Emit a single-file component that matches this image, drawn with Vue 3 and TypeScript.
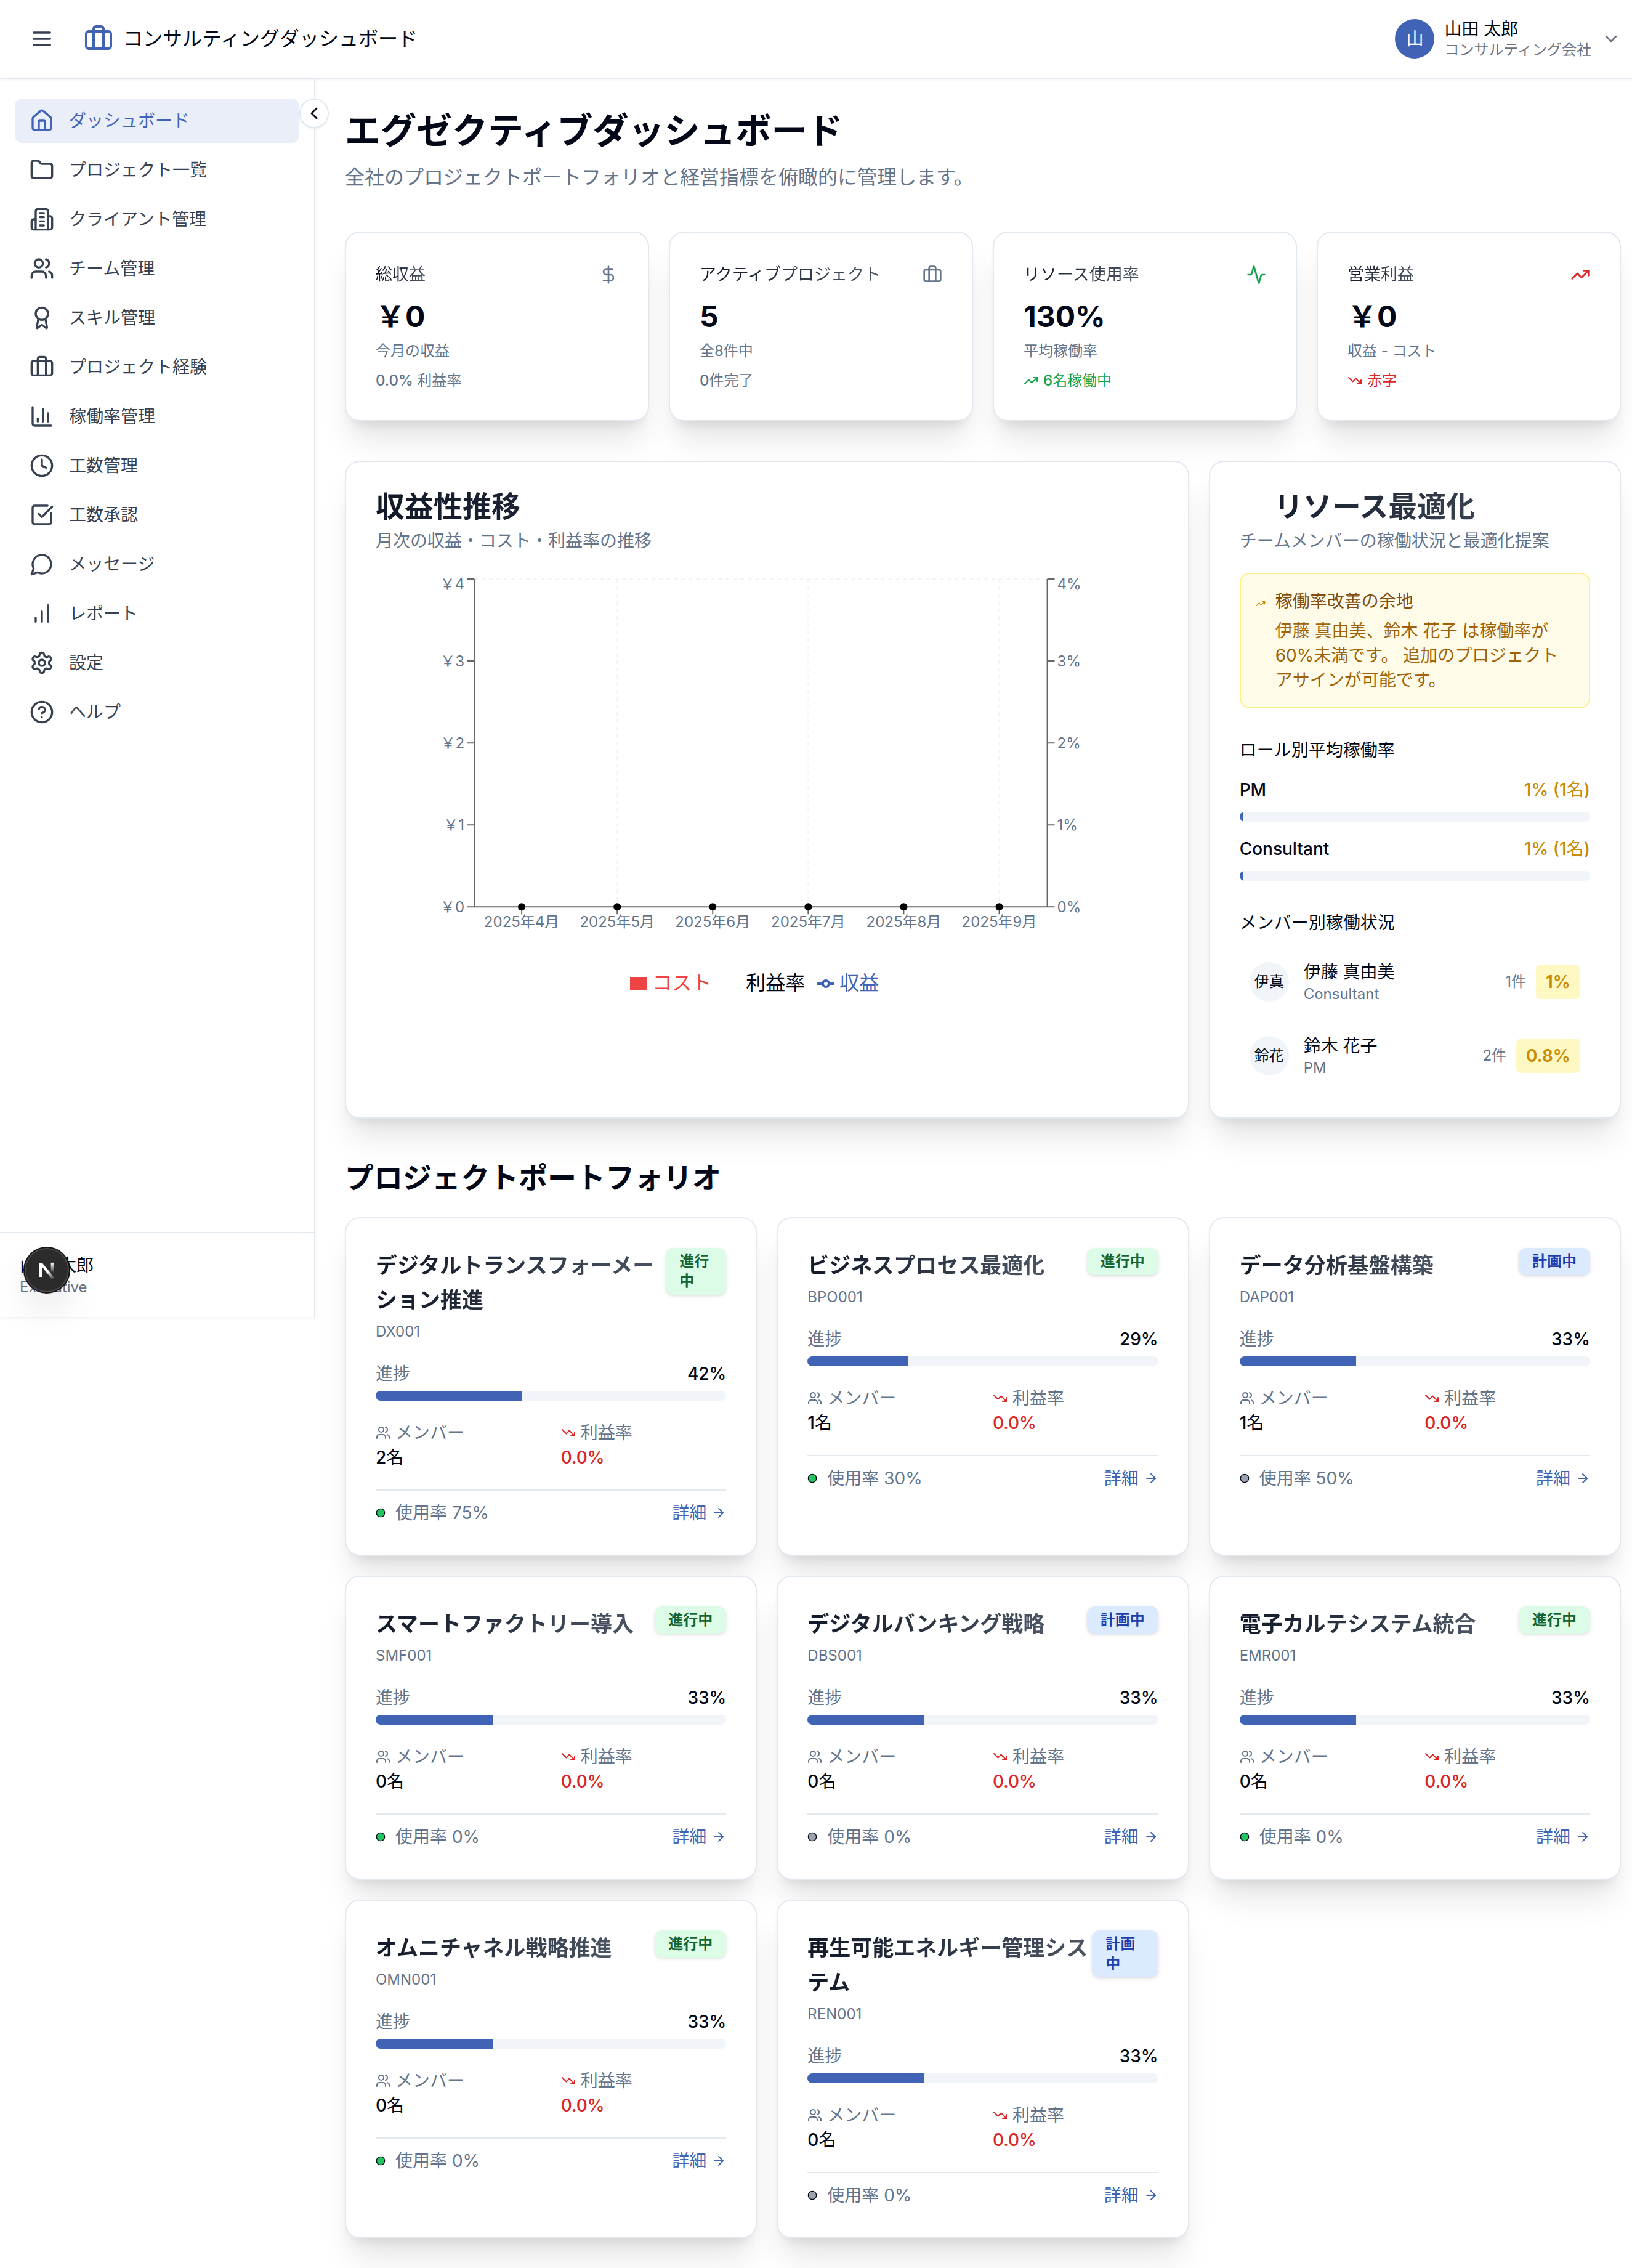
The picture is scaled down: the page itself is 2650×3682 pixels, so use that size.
<script setup lang="ts">
import { h, type FunctionalComponent } from 'vue'

type Shape = [string, Record<string, string | number>]

const p = (d: string): Shape => ['path', { d }]

const icons: Record<string, Shape[]> = {
  menu: [p('M4 6h16M4 12h16M4 18h16')],
  briefcase: [
    p('M16 20V4a2 2 0 0 0-2-2h-4a2 2 0 0 0-2 2v16'),
    ['rect', { x: 2, y: 6, width: 20, height: 14, rx: 2 }],
  ],
  home: [
    p('M15 21v-8a1 1 0 0 0-1-1h-4a1 1 0 0 0-1 1v8'),
    p('M3 10a2 2 0 0 1 .709-1.528l7-5.999a2 2 0 0 1 2.582 0l7 5.999A2 2 0 0 1 21 10v9a2 2 0 0 1-2 2H5a2 2 0 0 1-2-2z'),
  ],
  folder: [
    p('M20 20a2 2 0 0 0 2-2V8a2 2 0 0 0-2-2h-7.9a2 2 0 0 1-1.69-.9L9.6 3.9A2 2 0 0 0 7.93 3H4a2 2 0 0 0-2 2v13a2 2 0 0 0 2 2Z'),
  ],
  building: [
    p('M6 22V4a2 2 0 0 1 2-2h8a2 2 0 0 1 2 2v18Z'),
    p('M6 12H4a2 2 0 0 0-2 2v6a2 2 0 0 0 2 2h2'),
    p('M18 9h2a2 2 0 0 1 2 2v9a2 2 0 0 1-2 2h-2'),
    p('M10 6h4M10 10h4M10 14h4M10 18h4'),
  ],
  users: [
    p('M16 21v-2a4 4 0 0 0-4-4H6a4 4 0 0 0-4 4v2'),
    ['circle', { cx: 9, cy: 7, r: 4 }],
    p('M22 21v-2a4 4 0 0 0-3-3.87'),
    p('M16 3.13a4 4 0 0 1 0 7.75'),
  ],
  award: [
    p('m15.477 12.89 1.515 8.526a.5.5 0 0 1-.81.47l-3.58-2.687a1 1 0 0 0-1.197 0l-3.586 2.686a.5.5 0 0 1-.81-.469l1.514-8.526'),
    ['circle', { cx: 12, cy: 8, r: 6 }],
  ],
  chart: [p('M3 3v16a2 2 0 0 0 2 2h16'), p('M18 17V9M13 17V5M8 17v-3')],
  clock: [['circle', { cx: 12, cy: 12, r: 10 }], p('M12 6v6l4 2')],
  check: [
    p('M21 10.5V19a2 2 0 0 1-2 2H5a2 2 0 0 1-2-2V5a2 2 0 0 1 2-2h12.5'),
    p('m9 11 3 3L22 4'),
  ],
  message: [p('M7.9 20A9 9 0 1 0 4 16.1L2 22Z')],
  bars: [p('M12 20V10M18 20V4M6 20v-4')],
  settings: [
    p('M12.22 2h-.44a2 2 0 0 0-2 2v.18a2 2 0 0 1-1 1.73l-.43.25a2 2 0 0 1-2 0l-.15-.08a2 2 0 0 0-2.73.73l-.22.38a2 2 0 0 0 .73 2.73l.15.1a2 2 0 0 1 1 1.72v.51a2 2 0 0 1-1 1.74l-.15.09a2 2 0 0 0-.73 2.73l.22.38a2 2 0 0 0 2.73.73l.15-.08a2 2 0 0 1 2 0l.43.25a2 2 0 0 1 1 1.73V20a2 2 0 0 0 2 2h.44a2 2 0 0 0 2-2v-.18a2 2 0 0 1 1-1.73l.43-.25a2 2 0 0 1 2 0l.15.08a2 2 0 0 0 2.73-.73l.22-.39a2 2 0 0 0-.73-2.73l-.15-.08a2 2 0 0 1-1-1.74v-.5a2 2 0 0 1 1-1.74l.15-.09a2 2 0 0 0 .73-2.73l-.22-.38a2 2 0 0 0-2.73-.73l-.15.08a2 2 0 0 1-2 0l-.43-.25a2 2 0 0 1-1-1.73V4a2 2 0 0 0-2-2z'),
    ['circle', { cx: 12, cy: 12, r: 3 }],
  ],
  help: [
    ['circle', { cx: 12, cy: 12, r: 10 }],
    p('M9.09 9a3 3 0 0 1 5.83 1c0 2-3 3-3 3M12 17h.01'),
  ],
  dollar: [p('M12 2v20'), p('M17 5H9.5a3.5 3.5 0 0 0 0 7h5a3.5 3.5 0 0 1 0 7H6')],
  activity: [
    p('M22 12h-2.48a2 2 0 0 0-1.93 1.46l-2.35 8.36a.25.25 0 0 1-.48 0L9.24 2.18a.25.25 0 0 0-.48 0l-2.35 8.36A2 2 0 0 1 4.49 12H2'),
  ],
  up: [p('m22 7-8.5 8.5-5-5L2 17'), p('M16 7h6v6')],
  down: [p('m22 17-8.5-8.5-5 5L2 7'), p('M16 17h6v-6')],
  arrow: [p('M5 12h14'), p('m12 5 7 7-7 7')],
  left: [p('m15 18-6-6 6-6')],
  chevron: [p('m6 9 6 6 6-6')],
}

const Icon: FunctionalComponent<{ name: string; size: number }> = (props) =>
  h(
    'svg',
    {
      width: props.size,
      height: props.size,
      viewBox: '0 0 24 24',
      fill: 'none',
      stroke: 'currentColor',
      'stroke-width': 2,
      'stroke-linecap': 'round',
      'stroke-linejoin': 'round',
      'aria-hidden': 'true',
    },
    icons[props.name].map(([tag, attrs]) => h(tag, attrs)),
  )
Icon.props = ['name', 'size']

const navItems = [
  { icon: 'home', label: 'ダッシュボード' },
  { icon: 'folder', label: 'プロジェクト一覧' },
  { icon: 'building', label: 'クライアント管理' },
  { icon: 'users', label: 'チーム管理' },
  { icon: 'award', label: 'スキル管理' },
  { icon: 'briefcase', label: 'プロジェクト経験' },
  { icon: 'chart', label: '稼働率管理' },
  { icon: 'clock', label: '工数管理' },
  { icon: 'check', label: '工数承認' },
  { icon: 'message', label: 'メッセージ' },
  { icon: 'bars', label: 'レポート' },
  { icon: 'settings', label: '設定' },
  { icon: 'help', label: 'ヘルプ' },
]

// Full-width yen sign, as the ja-JP currency format prints it
const yen = (amount: number) => `\uFFE5${amount}`

interface Kpi {
  title: string
  icon: string
  tone: string
  value: string
  desc: string
  figure: string
  note: string
  noteIcon?: string
  noteTone: string
}

const kpis: Kpi[] = [
  { title: '総収益', icon: 'dollar', tone: 'muted', value: yen(0), desc: '今月の収益', figure: '0.0% ', note: '利益率', noteTone: 'muted' },
  { title: 'アクティブプロジェクト', icon: 'briefcase', tone: 'muted', value: '5', desc: '全8件中', figure: '0', note: '件完了', noteTone: 'muted' },
  { title: 'リソース使用率', icon: 'activity', tone: 'green', value: '130%', desc: '平均稼働率', figure: '6', note: '名稼働中', noteIcon: 'up', noteTone: 'green' },
  { title: '営業利益', icon: 'up', tone: 'red', value: yen(0), desc: '収益 - コスト', figure: '', note: '赤字', noteIcon: 'down', noteTone: 'red' },
]

const months = [4, 5, 6, 7, 8, 9].map((m, i) => ({ label: `2025年${m}月`, x: 237 + i * 155 }))
const ticks = [4, 3, 2, 1, 0].map((v, i) => ({ v, y: 10 + i * 133, ty: (i === 0 ? 18 : 10 + i * 133) + 9 }))

const roles = [
  { name: 'PM', rate: 1, people: 1 },
  { name: 'Consultant', rate: 1, people: 1 },
]

const members = [
  { initials: '伊真', name: '伊藤 真由美', role: 'Consultant', count: '1件', rate: '1%' },
  { initials: '鈴花', name: '鈴木 花子', role: 'PM', count: '2件', rate: '0.8%' },
]

const project = (name: string, code: string, active: boolean, done: number, total: number, people: number, usage: number) => ({
  name, code, active, progress: (done / total) * 100, people, usage,
})

const projects = [
  project('デジタルトランスフォーメーション推進', 'DX001', true, 5, 12, 2, 75),
  project('ビジネスプロセス最適化', 'BPO001', true, 2, 7, 1, 30),
  project('データ分析基盤構築', 'DAP001', false, 1, 3, 1, 50),
  project('スマートファクトリー導入', 'SMF001', true, 1, 3, 0, 0),
  project('デジタルバンキング戦略', 'DBS001', false, 1, 3, 0, 0),
  project('電子カルテシステム統合', 'EMR001', true, 1, 3, 0, 0),
  project('オムニチャネル戦略推進', 'OMN001', true, 1, 3, 0, 0),
  project('再生可能エネルギー管理システム', 'REN001', false, 1, 3, 0, 0),
]
</script>

<template>
  <div class="app" lang="ja">
    <header class="topbar">
      <button class="menu-btn" type="button" aria-label="メニュー"><Icon name="menu" :size="40" /></button>
      <a class="brand" href="#">
        <Icon name="briefcase" :size="48" />
        <span>コンサルティングダッシュボード</span>
      </a>
      <button class="user" type="button">
        <span class="user-avatar">山</span>
        <span class="user-text">
          <span class="user-name">山田 太郎</span>
          <span class="user-org">コンサルティング会社</span>
        </span>
        <Icon name="chevron" :size="32" />
      </button>
    </header>

    <div class="body">
      <aside class="sidebar">
        <button class="collapse" type="button" aria-label="サイドバーを閉じる"><Icon name="left" :size="32" /></button>
        <nav class="nav">
          <a v-for="(item, i) in navItems" :key="item.label" href="#" :class="['nav-item', { active: i === 0 }]">
            <Icon :name="item.icon" :size="40" />
            <span>{{ item.label }}</span>
          </a>
        </nav>
        <div class="side-user">
          <div>山田 太郎</div>
          <div class="side-role">Executive</div>
          <button class="dev-badge" type="button" aria-label="開発ツール">
            <svg width="44" height="44" viewBox="0 0 40 40" fill="none" aria-hidden="true">
              <defs>
                <linearGradient id="nd" x1="22" y1="22" x2="31" y2="33" gradientUnits="userSpaceOnUse">
                  <stop stop-color="#fff" /><stop offset="1" stop-color="#fff" stop-opacity="0" />
                </linearGradient>
                <linearGradient id="nv" x1="0" y1="9" x2="0" y2="24" gradientUnits="userSpaceOnUse">
                  <stop stop-color="#fff" /><stop offset="1" stop-color="#fff" stop-opacity="0" />
                </linearGradient>
              </defs>
              <path d="M9 30V9h4l18 22-3 3L13 15v15z" fill="url(#nd)" />
              <path d="M26 9h4v15h-4z" fill="url(#nv)" />
            </svg>
          </button>
        </div>
      </aside>

      <main class="main">
        <h1>エグゼクティブダッシュボード</h1>
        <p class="lead">全社のプロジェクトポートフォリオと経営指標を俯瞰的に管理します。</p>

        <section class="kpis">
          <article v-for="k in kpis" :key="k.title" class="card">
            <div class="kpi-head">
              <h2 class="kpi-title fade">{{ k.title }}</h2>
              <Icon :name="k.icon" :size="32" :class="k.tone" />
            </div>
            <div class="kpi-value">{{ k.value }}</div>
            <p class="kpi-desc">{{ k.desc }}</p>
            <p :class="['kpi-note', k.noteTone]">
              <Icon v-if="k.noteIcon" :name="k.noteIcon" :size="24" />
              <span><span class="strong">{{ k.figure }}</span>{{ k.note }}</span>
            </p>
          </article>
        </section>

        <section class="panels">
          <article class="card wide">
            <h2 class="panel-title fade">収益性推移</h2>
            <p class="panel-desc">月次の収益・コスト・利益率の推移</p>
            <svg class="chart" viewBox="0 0 1270 580" role="img" aria-label="月次の収益推移">
              <g class="grid">
                <path d="M160 10H1090M392 10V542M702 10V542M1012 10V542" />
              </g>
              <g class="axis">
                <path d="M160 10V542M1090 10V542M160 542H1090" />
                <path v-for="t in ticks" :key="t.v" :d="`M148 ${t.y}h12M1090 ${t.y}h12`" />
                <path v-for="m in months" :key="m.x" :d="`M${m.x} 542v12`" />
              </g>
              <g class="tick-text">
                <text v-for="t in ticks" :key="t.v" x="144" :y="t.ty" text-anchor="end">{{ yen(t.v) }}</text>
                <text v-for="t in ticks" :key="t.v" x="1106" :y="t.ty">{{ t.v }}%</text>
                <text v-for="m in months" :key="m.x" :x="m.x" y="575" text-anchor="middle">{{ m.label }}</text>
              </g>
              <circle v-for="m in months" :key="m.x" :cx="m.x" cy="542" r="6" />
            </svg>
            <ul class="legend">
              <li class="cost">
                <svg width="28" height="28" viewBox="0 0 28 28" aria-hidden="true"><path d="M0 4h28v21H0z" fill="currentColor" /></svg>
                コスト
              </li>
              <li>
                <svg width="28" height="28" viewBox="0 0 28 28" aria-hidden="true"></svg>
                利益率
              </li>
              <li class="income">
                <svg width="28" height="28" viewBox="0 0 28 28" fill="none" stroke="currentColor" stroke-width="4" aria-hidden="true">
                  <path d="M0 15h9M19 15h9" /><circle cx="14" cy="15" r="5" />
                </svg>
                収益
              </li>
            </ul>
          </article>

          <article class="card">
            <h2 class="panel-title shifted fade">リソース最適化</h2>
            <p class="panel-desc">チームメンバーの稼働状況と最適化提案</p>
            <div class="alert">
              <Icon name="up" :size="16" class="alert-icon" />
              <div>
                <h3>稼働率改善の余地</h3>
                <p>伊藤 真由美、鈴木 花子 は稼働率が60%未満です。 追加のプロジェクトアサインが可能です。</p>
              </div>
            </div>

            <h3 class="sub-title">ロール別平均稼働率</h3>
            <div class="roles">
              <div v-for="r in roles" :key="r.name">
                <div class="row">
                  <span class="strong">{{ r.name }}</span>
                  <span class="amber">{{ r.rate }}% ({{ r.people }}<span class="unit">名</span>)</span>
                </div>
                <div class="bar role-bar"><div class="fill" :style="{ width: r.rate + '%' }"></div></div>
              </div>
            </div>

            <h3 class="sub-title">メンバー別稼働状況</h3>
            <ul class="members">
              <li v-for="m in members" :key="m.name">
                <span class="avatar">{{ m.initials }}</span>
                <div class="member-text">
                  <div>{{ m.name }}</div>
                  <div class="member-role">{{ m.role }}</div>
                </div>
                <span class="count">{{ m.count }}</span>
                <span class="rate">{{ m.rate }}</span>
              </li>
            </ul>
          </article>
        </section>

        <section>
          <h2 class="section-title">プロジェクトポートフォリオ</h2>
          <div class="projects">
            <article v-for="pr in projects" :key="pr.code" class="card">
              <div class="project-head">
                <h3 class="project-title fade">{{ pr.name }}</h3>
                <span :class="['badge', pr.active ? 'active' : 'planned']">{{ pr.active ? '進行中' : '計画中' }}</span>
              </div>
              <p class="code">{{ pr.code }}</p>
              <div class="row progress-row">
                <span class="muted">進捗</span>
                <span class="strong">{{ Math.round(pr.progress) }}%</span>
              </div>
              <div class="bar"><div class="fill" :style="{ width: pr.progress + '%' }"></div></div>
              <dl class="stats">
                <div>
                  <dt><Icon name="users" :size="24" />メンバー</dt>
                  <dd>{{ pr.people }}<span class="unit">名</span></dd>
                </div>
                <div>
                  <dt><Icon name="down" :size="24" class="red" />利益率</dt>
                  <dd class="red">0.0%</dd>
                </div>
              </dl>
              <div class="row project-foot">
                <span class="usage muted">
                  <svg width="16" height="16" viewBox="0 0 24 24" aria-hidden="true">
                    <circle cx="12" cy="12" r="10" stroke="#020817" stroke-width="2" :fill="pr.active ? '#22c55e' : '#9ca3af'" />
                  </svg>
                  使用率 {{ pr.usage }}%
                </span>
                <a href="#" class="detail">詳細<Icon name="arrow" :size="24" /></a>
              </div>
            </article>
          </div>
        </section>
      </main>
    </div>
  </div>
</template>

<style>
body {
  margin: 0;
  background: #fff;
}
</style>

<style scoped>
.app,
.app * {
  box-sizing: border-box;
}
.app {
  font-family: Inter, 'Noto Sans CJK JP', sans-serif;
  font-size: 28px;
  line-height: 40px;
  color: #020817;
}
.app :is(h1, h2, h3, p, ul, dl, dd) {
  margin: 0;
  padding: 0;
}
.app ul {
  list-style: none;
}
.app svg {
  display: block;
}
a {
  color: inherit;
  text-decoration: none;
}
button {
  font: inherit;
  color: inherit;
  border: 0;
  padding: 0;
  background: none;
}
.muted {
  color: #64748b;
}
.green {
  color: #16a34a;
}
.red {
  color: #dc2626;
}
.strong {
  font-weight: 500;
}
.unit {
  font-weight: 400;
}

.topbar {
  display: flex;
  align-items: center;
  height: 128px;
  padding: 0 18px 0 48px;
  background: #fff;
  border-bottom: 2px solid #e2e8f0;
  box-shadow: 0 2px 4px rgb(0 0 0 / 0.05);
}
.menu-btn {
  color: #374151;
}
.brand {
  display: flex;
  align-items: center;
  gap: 16px;
  margin-left: 48px;
  font-size: 32px;
  line-height: 48px;
}
.brand svg {
  color: #4063b5;
}
.user {
  display: flex;
  align-items: center;
  gap: 16px;
  margin-left: auto;
  text-align: left;
}
.user > svg {
  color: #6b7280;
}
.user-avatar {
  display: grid;
  place-items: center;
  width: 64px;
  height: 64px;
  border-radius: 50%;
  background: #4063b5;
  color: #fff;
}
.user-text {
  display: flex;
  flex-direction: column;
}
.user-name {
  line-height: 36px;
}
.user-org {
  font-size: 24px;
  line-height: 32px;
  color: #6b7280;
}

.body {
  display: flex;
  align-items: flex-start;
}
.sidebar {
  position: relative;
  flex: 0 0 512px;
  border-right: 2px solid #e2e8f0;
  box-shadow: 0 2px 4px rgb(0 0 0 / 0.05);
}
.collapse {
  position: absolute;
  top: 32px;
  right: -24px;
  display: grid;
  place-items: center;
  width: 48px;
  height: 48px;
  border: 2px solid #e2e8f0;
  border-radius: 50%;
  background: #fff;
  box-shadow: 0 2px 4px rgb(0 0 0 / 0.05);
}
.nav {
  display: flex;
  flex-direction: column;
  gap: 8px;
  min-height: 1872px;
  padding: 32px 24px;
}
.nav-item {
  display: flex;
  align-items: center;
  gap: 24px;
  padding: 16px 24px;
  border-radius: 12px;
  color: #374151;
}
.nav-item.active {
  background: #e9eef8;
  color: #4063b5;
}
.side-user {
  position: relative;
  padding: 32px;
  border-top: 2px solid #e2e8f0;
}
.side-role {
  font-size: 24px;
  line-height: 32px;
  color: #6b7280;
}
.dev-badge {
  position: absolute;
  top: 22px;
  left: 38px;
  display: grid;
  place-items: center;
  width: 76px;
  height: 76px;
  border: 2px solid #151515;
  border-radius: 50%;
  background: #2b2b2b;
  box-shadow: inset 0 0 0 2px #4a4a4a, 0 32px 64px -16px rgb(0 0 0 / 0.24);
}

.main {
  flex: 1;
  min-width: 0;
  padding: 48px 18px 48px 48px;
}
h1 {
  font-size: 58px;
  line-height: 72px;
  font-weight: 700;
}
.app .lead {
  margin-top: 16px;
  font-size: 32px;
  line-height: 48px;
  color: #64748b;
}
.card {
  padding: 48px;
  background: #fff;
  border: 2px solid #e2e8f0;
  border-radius: 24px;
  box-shadow: 0 40px 50px -10px rgb(0 0 0 / 0.1), 0 16px 20px -12px rgb(0 0 0 / 0.1);
}
.fade {
  color: transparent;
  background: linear-gradient(to right, #111827, #4b5563);
  background-clip: text;
  -webkit-background-clip: text;
}
.kpis {
  display: grid;
  grid-template-columns: repeat(4, 1fr);
  gap: 32px;
  margin-top: 64px;
}
.kpi-head {
  display: flex;
  align-items: center;
  justify-content: space-between;
}
.kpi-title {
  font-size: 27px;
  line-height: 40px;
  font-weight: 400;
}
.kpi-value {
  margin-top: 16px;
  font-size: 48px;
  line-height: 64px;
  font-weight: 700;
}
.app .kpi-desc {
  margin-top: 8px;
  font-size: 24px;
  line-height: 32px;
  color: #64748b;
}
.app .kpi-note {
  display: flex;
  align-items: center;
  gap: 8px;
  margin-top: 16px;
  font-size: 24px;
  line-height: 32px;
}
.kpi-note span {
  white-space: pre-wrap;
}

.panels {
  display: grid;
  grid-template-columns: repeat(3, 1fr);
  gap: 32px;
  margin-top: 64px;
}
.wide {
  grid-column: span 2;
}
.panel-title {
  font-size: 47px;
  line-height: 48px;
  font-weight: 700;
}
.app .shifted {
  padding-left: 56px;
}
.app .panel-desc {
  margin-top: 12px;
  color: #64748b;
}
.chart {
  width: 100%;
  margin-top: 32px;
}
.grid {
  fill: none;
  stroke: #f1f5f9;
  stroke-width: 2;
  stroke-dasharray: 6 6;
}
.axis {
  fill: none;
  stroke: #666;
  stroke-width: 2;
}
.tick-text {
  font-size: 24px;
  fill: #64748b;
}
.app .legend {
  display: flex;
  justify-content: center;
  gap: 20px;
  margin-top: 62px;
  padding-right: 40px;
  font-size: 32px;
  line-height: 48px;
}
.legend li {
  display: flex;
  align-items: center;
  gap: 8px;
}
.cost {
  color: #ef4444;
}
.income {
  color: #4063b5;
}

.alert {
  display: flex;
  gap: 16px;
  margin-top: 32px;
  padding: 24px;
  border: 2px solid #fef08a;
  border-radius: 16px;
  background: #fefce8;
  color: #a16207;
}
.alert h3 {
  font-size: 28px;
  font-weight: 400;
  color: #854d0e;
}
.app .alert p {
  margin-top: 8px;
}
.alert-icon {
  flex: none;
  margin-top: 16px;
  color: #ca8a04;
}
.app .sub-title {
  margin: 48px 0 24px;
  font-size: 28px;
  font-weight: 400;
}
.roles {
  display: flex;
  flex-direction: column;
  gap: 24px;
}
.row {
  display: flex;
  align-items: center;
  justify-content: space-between;
}
.amber {
  font-weight: 500;
  color: #ca8a04;
}
.bar {
  height: 16px;
  margin-top: 8px;
  border-radius: 8px;
  overflow: hidden;
  background: #f1f5f9;
}
.role-bar {
  margin-top: 16px;
}
.fill {
  height: 100%;
  background: #4063b5;
}
.members {
  display: flex;
  flex-direction: column;
  gap: 16px;
}
.members li {
  display: flex;
  align-items: center;
  padding: 16px;
}
.avatar {
  display: grid;
  place-items: center;
  width: 64px;
  height: 64px;
  margin-right: 24px;
  border-radius: 50%;
  background: #f1f5f9;
  font-size: 24px;
}
.member-text {
  flex: 1;
}
.member-role {
  font-size: 24px;
  line-height: 32px;
  color: #64748b;
}
.count {
  font-size: 24px;
  color: #64748b;
}
.rate {
  margin-left: 16px;
  padding: 8px 16px;
  border-radius: 8px;
  background: #fef9c3;
  color: #ca8a04;
  font-weight: 600;
}

.section-title {
  font-size: 47px;
  line-height: 64px;
  font-weight: 700;
}
.app .section-title {
  margin: 64px 0 32px;
}
.projects {
  display: grid;
  grid-template-columns: repeat(3, 1fr);
  gap: 32px;
}
.project-head {
  display: flex;
  align-items: flex-start;
  justify-content: space-between;
}
.project-title {
  font-size: 35px;
  line-height: 56px;
  font-weight: 700;
}
.badge {
  padding: 4px 20px;
  border: 2px solid transparent;
  border-radius: 12px;
  font-size: 24px;
  line-height: 32px;
  font-weight: 700;
  box-shadow: 0 2px 6px rgb(0 0 0 / 0.1), 0 2px 4px -2px rgb(0 0 0 / 0.1);
}
.badge.active {
  background: #dcfce7;
  color: #166534;
}
.badge.planned {
  background: #dbeafe;
  color: #1e40af;
}
.app .code {
  margin-top: 8px;
  font-size: 24px;
  line-height: 32px;
  color: #64748b;
}
.progress-row {
  margin-top: 32px;
}
.app .stats {
  display: grid;
  grid-template-columns: repeat(2, 1fr);
  gap: 32px;
  margin-top: 32px;
}
dt {
  display: flex;
  align-items: center;
  gap: 8px;
  color: #64748b;
}
dd {
  font-weight: 500;
}
.project-foot {
  margin-top: 32px;
  padding-top: 16px;
  border-top: 2px solid #e2e8f0;
}
.usage {
  display: flex;
  align-items: center;
  gap: 16px;
}
.detail {
  display: flex;
  align-items: center;
  gap: 8px;
  color: #4063b5;
}
</style>
